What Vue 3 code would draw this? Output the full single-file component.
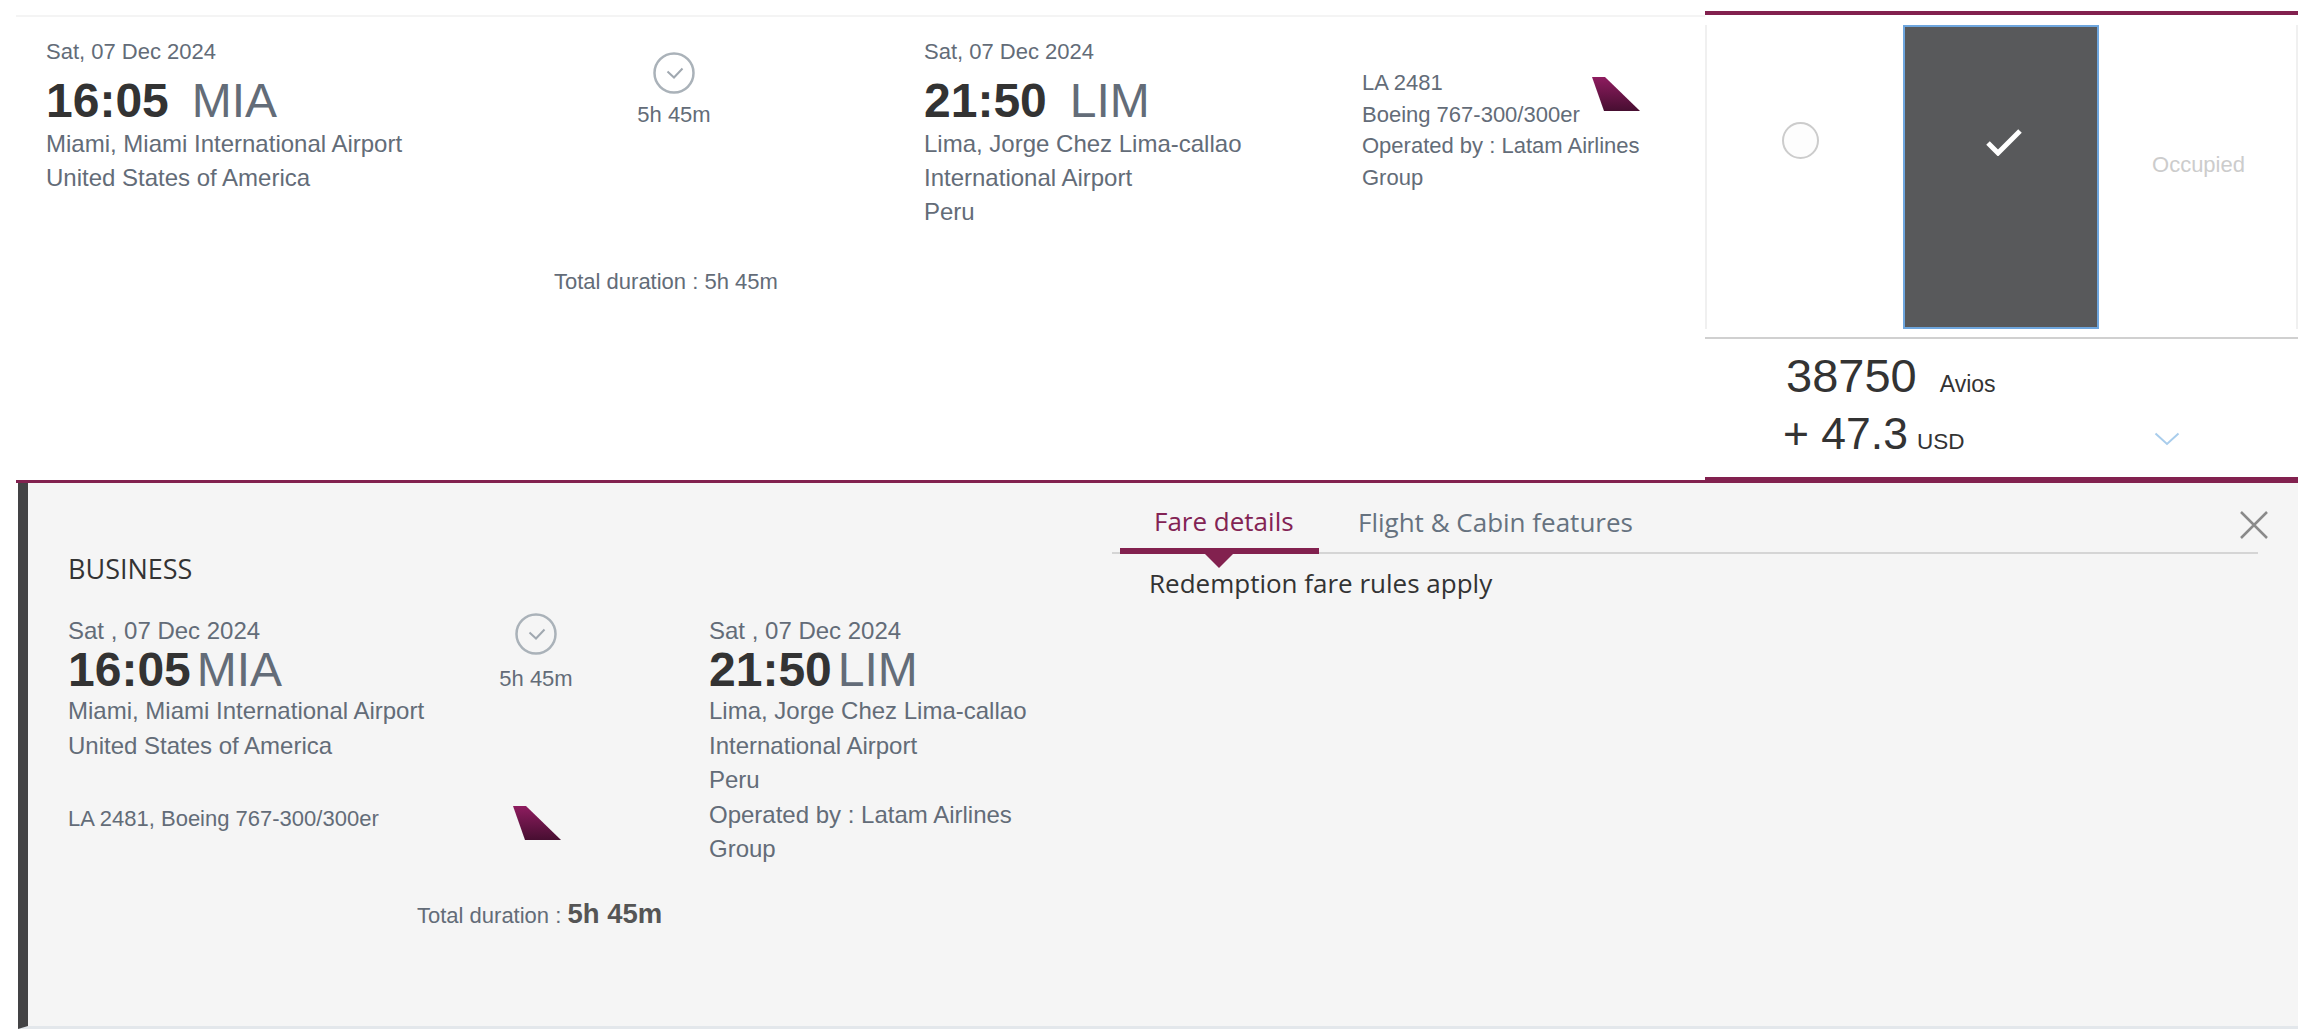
<template>
  <div class="page">
    <div class="summary">
      <div class="flight">
        <div class="legs">
          <div class="leg">
            <div class="date">Sat, 07 Dec 2024</div>
            <div class="time"><b>16:05</b><span>MIA</span></div>
            <p>Miami, Miami International Airport</p>
            <p>United States of America</p>
          </div>
          <div class="duration">
            <svg class="clock" width="42" height="42" viewBox="0 0 42 42">
              <circle cx="21" cy="21" r="19.500" fill="none" stroke="#aab2b9" stroke-width="2.500" />
              <path d="M14.500 19.500l6.500 6 8.500-9" fill="none" stroke="#a0a8b0" stroke-width="2" />
            </svg>
            <div>5h 45m</div>
          </div>
          <div class="leg">
            <div class="date">Sat, 07 Dec 2024</div>
            <div class="time"><b>21:50</b><span>LIM</span></div>
            <p>Lima, Jorge Chez Lima-callao<br />International Airport</p>
            <p>Peru</p>
          </div>
          <div class="carrier">
            <div class="carrier-head">
              <div>
                <div>LA 2481</div>
                <div>Boeing 767-300/300er</div>
              </div>
              <svg class="tail" width="48" height="34" viewBox="0 0 48 34">
                <defs>
                  <linearGradient id="tailFill" x1="0" y1="0" x2="0" y2="1">
                    <stop offset="0" stop-color="#8e1c5f" />
                    <stop offset="1" stop-color="#470e31" />
                  </linearGradient>
                </defs>
                <path d="M0 0h13l35 34H12z" fill="url(#tailFill)" />
              </svg>
            </div>
            <div>Operated by : Latam Airlines Group</div>
          </div>
        </div>
        <div class="total">Total duration : 5h 45m</div>
      </div>

      <div class="fares">
        <div class="cabins">
          <div class="cabin first">
            <span class="radio"></span>
          </div>
          <div class="cabin selected">
            <svg width="38" height="28" viewBox="0 0 38 28">
              <path d="M3 15l10 10L35 3" fill="none" stroke="#fff" stroke-width="5" />
            </svg>
          </div>
          <div class="cabin occupied">Occupied</div>
        </div>
        <div class="price">
          <div class="price-row">
            <span class="amount">38750</span>
            <span class="avios">Avios</span>
          </div>
          <div class="price-row">
            <span class="amount usd">+ 47.3</span>
            <span class="currency">USD</span>
            <svg class="chevron" width="26" height="14" viewBox="0 0 26 14">
              <path d="M1.500 1.500L13 12 24.500 1.500" fill="none" stroke="#a9cdec" stroke-width="2" />
            </svg>
          </div>
        </div>
      </div>
    </div>

    <div class="details">
      <div class="itinerary">
        <h3>BUSINESS</h3>
        <div class="detail-legs">
          <div class="detail-leg">
            <div class="date">Sat , 07 Dec 2024</div>
            <div class="time"><b>16:05</b><span>MIA</span></div>
            <p>Miami, Miami International Airport</p>
            <p>United States of America</p>
            <div class="aircraft">LA 2481, Boeing 767-300/300er</div>
          </div>
          <div class="detail-mid">
            <svg class="clock" width="42" height="42" viewBox="0 0 42 42">
              <circle cx="21" cy="21" r="19.500" fill="none" stroke="#aab2b9" stroke-width="2.500" />
              <path d="M14.500 19.500l6.500 6 8.500-9" fill="none" stroke="#a0a8b0" stroke-width="2" />
            </svg>
            <div>5h 45m</div>
            <svg class="tail" width="48" height="34" viewBox="0 0 48 34">
              <path d="M0 0h13l35 34H12z" fill="url(#tailFill)" />
            </svg>
          </div>
          <div class="detail-leg">
            <div class="date">Sat , 07 Dec 2024</div>
            <div class="time"><b>21:50</b><span>LIM</span></div>
            <p>Lima, Jorge Chez Lima-callao<br />International Airport</p>
            <p>Peru</p>
            <p>Operated by : Latam Airlines<br />Group</p>
          </div>
        </div>
        <div class="detail-total">Total duration : <b>5h 45m</b></div>
      </div>

      <div class="tabs-area">
        <div class="tabs">
          <span v-for="(tab, i) in tabs" :key="tab" class="tab" :class="{ active: i === 0 }">{{ tab }}</span>
          <svg class="close" width="30" height="30" viewBox="0 0 30 30">
            <path d="M2 2l26 26M28 2L2 28" stroke="#8a8a8a" stroke-width="2.500" fill="none" />
          </svg>
        </div>
        <div class="rules">Redemption fare rules apply</div>
      </div>
    </div>
  </div>
</template>

<script setup>
const tabs = ['Fare details', 'Flight & Cabin features']
</script>

<style>
html,
body {
  background: #fff;
}
</style>

<style scoped>
.page {
  width: 2282px;
  margin-left: 16px;
  padding-top: 11px;
  font-family: "Liberation Sans", Arial, sans-serif;
  font-size: 22px;
  color: #636c78;
}

p {
  margin: 0;
}

.summary {
  display: flex;
  height: 472px;
}

/* left part of the result row */
.flight {
  flex: 1;
  margin-top: 4px;
  padding: 22px 0 0 30px;
  border-top: 2px solid #f4f4f4;
  border-bottom: 3px solid #82214f;
}

.legs {
  display: flex;
}

.leg {
  width: 438px;
  font-size: 24px;
  line-height: 34px;
}

.date {
  font-size: 22px;
  line-height: 26px;
}

.time {
  display: flex;
  align-items: baseline;
  margin-top: 11px;
  margin-bottom: 1px;
  font-size: 48px;
  line-height: 50px;
}

.time b {
  color: #333;
}

.time span {
  margin-left: 23px;
}

.duration {
  width: 448px;
  margin-left: -8px;
  padding: 13px 52px 0 0;
  text-align: center;
  box-sizing: border-box;
}

.clock {
  display: block;
  margin: 0 auto 8px;
}

.carrier {
  width: 282px;
  padding-top: 28px;
  line-height: 31.500px;
}

.carrier-head {
  display: flex;
  justify-content: space-between;
}

.carrier-head .tail {
  margin-top: 10px;
  margin-right: 4px;
}

.total {
  margin-top: 40px;
  margin-left: 508px;
}

/* fare column on the right */
.fares {
  width: 593px;
  display: flex;
  flex-direction: column;
  border-top: 4px solid #82214f;
  border-bottom: 6px solid #82214f;
  box-sizing: border-box;
}

.cabins {
  display: flex;
  height: 304px;
  margin-top: 10px;
  border-left: 2px solid #f0f0f0;
  border-right: 2px solid #f0f0f0;
}

.cabin {
  width: 195px;
  display: flex;
  justify-content: center;
  box-sizing: border-box;
}

.first {
  padding-right: 8px;
}

.radio {
  width: 37px;
  height: 37px;
  margin-top: 97px;
  border: 2px solid #ccc;
  border-radius: 50%;
  background: #fdfdfd;
  box-sizing: border-box;
}

.selected {
  width: 196px;
  margin-left: 1px;
  padding: 101px 0 0 6px;
  background: #58595b;
  border: 2px solid #6ea6de;
}

.occupied {
  flex: 1;
  padding: 127px 0 0 2px;
  color: #ccc;
  line-height: 26px;
}

.price {
  flex: 1;
  margin-top: 8px;
  padding: 11px 0 0 78px;
  border-top: 2px solid #d0d0d0;
  color: #333;
}

.price-row {
  display: flex;
  align-items: baseline;
  height: 58px;
}

.amount {
  font-size: 47px;
  line-height: 52px;
  margin-left: 3px;
}

.avios {
  margin-left: 23px;
  font-size: 23px;
}

.usd {
  font-size: 44.500px;
  margin-left: 0;
}

.currency {
  margin-left: 9px;
  font-size: 22.500px;
}

.chevron {
  align-self: center;
  margin: 3px 0 0 190px;
}

/* expanded details */
.details {
  display: flex;
  height: 546px;
  margin-left: 2px;
  background: #f5f5f5;
  border-left: 10px solid #434345;
  border-bottom: 3px solid #e3e7eb;
  box-sizing: border-box;
}

.itinerary {
  width: 1084px;
  padding: 69px 0 0 40px;
  box-sizing: border-box;
}

h3 {
  margin: 0 0 32px;
  font-family: "Open Sans", sans-serif;
  font-size: 27px;
  font-weight: 400;
  line-height: 34px;
  color: #333;
}

.detail-legs {
  display: flex;
}

.detail-leg {
  font-size: 24px;
  line-height: 34.500px;
}

.detail-leg:first-child {
  width: 424px;
}

.detail-leg .date {
  font-size: 24px;
}

.detail-leg .time {
  margin-top: 1px;
  margin-bottom: -1px;
}

.detail-leg .time span {
  margin-left: 6px;
}

.aircraft {
  margin-top: 43px;
  font-size: 22px;
  line-height: 26px;
}

.detail-mid {
  width: 168px;
  margin: -5px 89px 0 -40px;
  text-align: center;
}

.detail-mid .clock {
  margin-bottom: 11px;
}

.detail-mid .tail {
  display: block;
  margin: 114px 59px 0 61px;
}

.detail-total {
  margin-top: 31px;
  margin-left: 349px;
}

.detail-total b {
  font-size: 27.500px;
  color: #555;
}

.tabs-area {
  flex: 1;
  padding-right: 40px;
}

.tabs {
  position: relative;
  display: flex;
  height: 71px;
  border-bottom: 2px solid #d5d5d5;
  box-sizing: border-box;
  font-family: "Open Sans", sans-serif;
  font-size: 26px;
  color: #66727f;
}

.tab {
  display: flex;
  align-items: center;
  height: 71px;
  padding: 6px 27px 0;
  margin-left: 12px;
  box-sizing: border-box;
  white-space: nowrap;
}

.tab.active {
  position: relative;
  width: 199px;
  margin-left: 8px;
  padding: 10px 0 0 34px;
  color: #832354;
  border-bottom: 6px solid #82214f;
}

.tab.active::after {
  content: "";
  position: absolute;
  left: 85px;
  bottom: -20px;
  border-left: 14px solid transparent;
  border-right: 14px solid transparent;
  border-top: 14px solid #82214f;
}

.close {
  position: absolute;
  right: -11px;
  top: 27px;
}

.rules {
  margin-top: 11px;
  margin-left: 37px;
  font-family: "Open Sans", sans-serif;
  font-size: 26px;
  line-height: 36px;
  color: #333;
}
</style>
